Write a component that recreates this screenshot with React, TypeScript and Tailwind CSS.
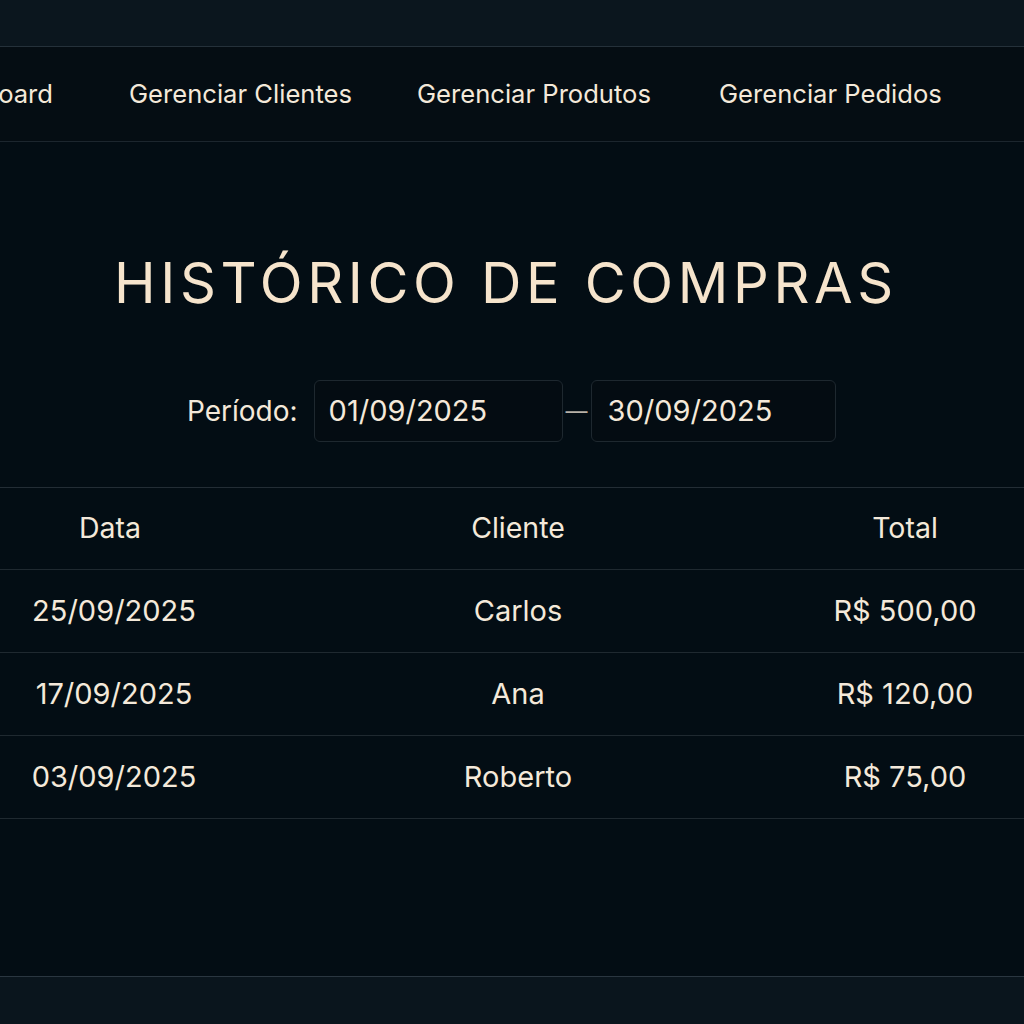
import React from "react";

const rows = [
  { d: "25/09/2025", c: "Carlos", t: "R$ 500,00" },
  { d: "17/09/2025", c: "Ana", t: "R$ 120,00" },
  { d: "03/09/2025", c: "Roberto", t: "R$ 75,00" },
];

export default function App() {
  return (
    <div className="w-[1024px] h-[1024px] overflow-hidden flex flex-col bg-[#030d14] text-[#f4e9da] font-['Inter',sans-serif]">
      <div className="h-[47px] bg-[#0b161e] border-b border-[#25313a]" />
      <nav className="h-[95px] bg-[#050d13] border-b border-[#1c262e] flex items-center overflow-hidden">
        <div className="flex items-center ml-[-79px] text-[25.6px] whitespace-nowrap">
          <span className="mr-[76px]">Dashboard</span>
          <span className="mr-[65px]">Gerenciar Clientes</span>
          <span className="mr-[68px]">Gerenciar Produtos</span>
          <span>Gerenciar Pedidos</span>
        </div>
      </nav>
      <main className="flex-1 flex flex-col">
        <h1 className="mt-[107px] text-center text-[56px] leading-[68px] tracking-[0.083em] text-[#f6e4cc] mr-[12px]">
          HISTÓRICO DE COMPRAS
        </h1>
        <div className="mt-[63px] flex items-center ml-[187px]">
          <span className="text-[28px] mr-[16px]">Período:</span>
          <div className="w-[249px] h-[62px] rounded-[6px] border border-[#1e282f] bg-[#040c12] flex items-center px-[14px] text-[29px]">
            01/09/2025
          </div>
          <span className="w-[28px] text-center text-[22px] text-[#b9b2a8]">—</span>
          <div className="w-[245px] h-[62px] rounded-[6px] border border-[#1e282f] bg-[#040c12] flex items-center px-[16px] text-[29px]">
            30/09/2025
          </div>
        </div>
        <div className="mt-[45px] border-t border-[#232d35]">
          <div className="grid grid-cols-[224px_588px_186px] h-[82px] items-center border-b border-[#1f2930] text-[28.5px]">
            <span className="text-center pr-[4px]">Data</span>
            <span className="text-center">Cliente</span>
            <span className="text-center">Total</span>
          </div>
          {rows.map((r) => (
            <div key={r.d} className="grid grid-cols-[224px_588px_186px] h-[83px] items-center border-b border-[#1f2930] text-[29px]">
              <span className="text-center pl-[4px]">{r.d}</span>
              <span className="text-center">{r.c}</span>
              <span className="text-center">{r.t}</span>
            </div>
          ))}
        </div>
      </main>
      <footer className="h-[48px] bg-[#0a151d] border-t border-[#2a3640]" />
    </div>
  );
}
